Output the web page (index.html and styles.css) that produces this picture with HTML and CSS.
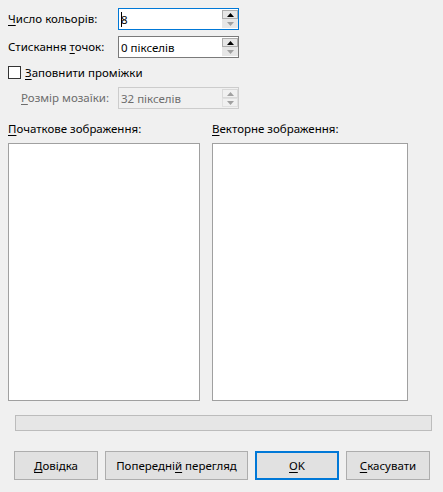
FILE: index.html
```html
<!DOCTYPE html>
<html lang="uk">
<head>
<meta charset="utf-8">
<link rel="stylesheet" href="styles.css">
</head>
<body>
<div class="dialog">
  <div class="row r1">
    <label class="lbl"><u>Ч</u>исло кольорів:</label>
    <div class="spin focused">
      <span class="val"><span class="caret"></span>8</span>
      <div class="spin-btns">
        <span class="sb up"><svg width="7" height="4" viewBox="0 0 7 4"><polygon points="3.5,0 7,4 0,4" fill="#000"/></svg></span>
        <span class="sb down"><svg width="7" height="4" viewBox="0 0 7 4"><polygon points="0,0 7,0 3.5,4" fill="#a0a0a0"/></svg></span>
      </div>
    </div>
  </div>
  <div class="row r2">
    <label class="lbl">Стискання <u>т</u>очок:</label>
    <div class="spin">
      <span class="val">0 пікселів</span>
      <div class="spin-btns">
        <span class="sb up"><svg width="7" height="4" viewBox="0 0 7 4"><polygon points="3.5,0 7,4 0,4" fill="#000"/></svg></span>
        <span class="sb down"><svg width="7" height="4" viewBox="0 0 7 4"><polygon points="0,0 7,0 3.5,4" fill="#a0a0a0"/></svg></span>
      </div>
    </div>
  </div>
  <div class="row check-row">
    <span class="checkbox"></span>
    <label class="check-lbl"><u>З</u>аповнити проміжки</label>
  </div>
  <div class="row r4">
    <label class="lbl lbl-ind disabled"><u>Р</u>озмір мозаїки:</label>
    <div class="spin disabled-spin">
      <span class="val">32 пікселів</span>
      <div class="spin-btns">
        <span class="sb up"><svg width="7" height="4" viewBox="0 0 7 4"><polygon points="3.5,0 7,4 0,4" fill="#a0a0a0"/></svg></span>
        <span class="sb down"><svg width="7" height="4" viewBox="0 0 7 4"><polygon points="0,0 7,0 3.5,4" fill="#a0a0a0"/></svg></span>
      </div>
    </div>
  </div>
  <div class="previews">
    <div class="pcol left">
      <div class="plabel"><u>П</u>очаткове зображення:</div>
      <div class="pbox"></div>
    </div>
    <div class="pcol right">
      <div class="plabel"><u>В</u>екторне зображення:</div>
      <div class="pbox"></div>
    </div>
  </div>
  <div class="progress"></div>
  <div class="buttons">
    <button class="btn b-help"><u>Д</u>овідка</button>
    <button class="btn b-prev">Попередні<u>й</u> перегляд</button>
    <button class="btn b-ok default"><u>О</u>K</button>
    <button class="btn b-cancel"><u>С</u>касувати</button>
  </div>
</div>
</body>
</html>
```
FILE: styles.css
```css
html, body {
  margin: 0;
  padding: 0;
  background: #f0f0f0;
}
body {
  font-family: "Noto Sans", "Open Sans", sans-serif;
  font-size: 11.5px;
  color: #000;
  width: 443px;
  height: 492px;
  overflow: hidden;
}
u {
  text-decoration: underline;
  text-underline-offset: 2px;
  text-decoration-thickness: 1px;
}
.dialog {
  display: flex;
  flex-direction: column;
  padding: 8px 0 0 8px;
}
.row {
  display: flex;
  align-items: center;
}
.lbl {
  width: 110px;
  flex: none;
  line-height: 22px;
  white-space: nowrap;
}
.lbl-ind {
  width: 97px;
  padding-left: 13px;
}
.disabled {
  color: #6d6d6d;
}
.r2 { margin-top: 6px; }
.check-row {
  margin-top: 8px;
  height: 13px;
}
.r4 { margin-top: 8px; }
.spin {
  position: relative;
  box-sizing: border-box;
  width: 121px;
  height: 22px;
  border: 1px solid #7a7a7a;
  background: #fff;
  display: flex;
  align-items: center;
  justify-content: space-between;
}
.spin.focused { border-color: #0078d7; }
.spin.disabled-spin {
  border-color: #cccccc;
  background: #f0f0f0;
  color: #6d6d6d;
}
.val {
  padding-left: 2px;
  display: flex;
  align-items: center;
  white-space: nowrap;
}
.caret {
  display: inline-block;
  width: 1px;
  height: 15px;
  background: #000;
  margin-right: -1px;
}
.spin-btns {
  align-self: stretch;
  display: flex;
  flex-direction: column;
  width: 16px;
  padding-top: 1px;
  padding-bottom: 1px;
  box-sizing: border-box;
}
.sb {
  box-sizing: border-box;
  display: flex;
  align-items: center;
  justify-content: center;
  background: #e6e6e6;
}
.sb.up {
  height: 9px;
  border: 1px solid #adadad;
}
.sb.down {
  height: 9px;
  border: 1px solid #e6e6e6;
}
.disabled-spin .sb.up,
.disabled-spin .sb.down {
  border-color: #e0e0e0;
  background: #f0f0f0;
}
.disabled-spin .sb.up { border-color: #d9d9d9; }
.checkbox {
  box-sizing: border-box;
  width: 13px;
  height: 13px;
  border: 1px solid #333;
  background: #fff;
  flex: none;
}
.check-lbl {
  margin-left: 4px;
  white-space: nowrap;
}
.previews {
  display: flex;
  gap: 12px;
  margin-top: 12px;
}
.pcol {
  display: flex;
  flex-direction: column;
}
.pcol.left { width: 192px; }
.pcol.right { width: 196px; }
.plabel {
  height: 22px;
  line-height: 16px;
  white-space: nowrap;
}
.pbox {
  box-sizing: border-box;
  height: 258px;
  border: 1px solid #a0a0a0;
  background: #fff;
}
.progress {
  box-sizing: border-box;
  margin: 14px 0 0 7px;
  width: 417px;
  height: 16px;
  border: 1px solid #bcbcbc;
  background: #e6e6e6;
}
.buttons {
  display: flex;
  gap: 7px;
  margin: 20px 0 0 6px;
}
.btn {
  box-sizing: border-box;
  height: 29px;
  border: 1px solid #adadad;
  background: #e1e1e1;
  font: inherit;
  color: #000;
  padding: 0;
  margin: 0;
}
.b-help, .b-ok, .b-cancel { width: 84px; }
.b-prev { width: 143px; }
.btn.default {
  border: 2px solid #0078d7;
}
```
